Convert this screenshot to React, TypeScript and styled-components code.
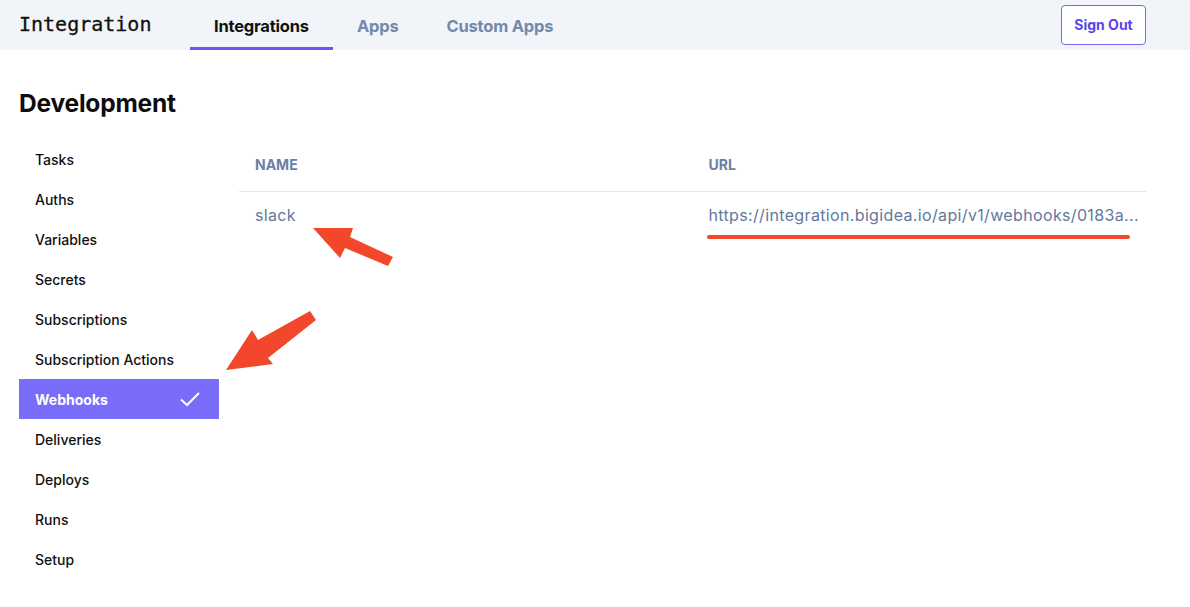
import React from "react";
import styled, { createGlobalStyle } from "styled-components";

const GlobalStyle = createGlobalStyle`
  html, body { margin: 0; padding: 0; background: #ffffff; }
  body { font-family: Inter, "Noto Sans", sans-serif; color: #111111; }
  * { box-sizing: border-box; }
`;

const Page = styled.div`
  position: relative;
  width: 1190px;
  min-height: 607px;
`;

const Header = styled.header`
  height: 50px;
  background: #f1f4f8;
  display: flex;
  align-items: stretch;
  padding: 0 44px 0 19px;
`;

const Logo = styled.div`
  font-family: "DejaVu Sans Mono", "Liberation Mono", monospace;
  font-size: 20px;
  color: #111;
  display: flex;
  align-items: center;
  width: 171px;
  padding-bottom: 2px;
  -webkit-text-stroke: 0.3px #111;
`;

const Tabs = styled.nav`
  display: flex;
  flex: 1;
`;

const Tab = styled.a<{ $active?: boolean }>`
  display: flex;
  align-items: center;
  padding: 4px 24px 0;
  font-size: 16.5px;
  font-weight: 700;
  letter-spacing: -0.2px;
  color: ${(p) => (p.$active ? "#111111" : "#7289aa")};
  border-bottom: 3px solid ${(p) => (p.$active ? "#6a57f0" : "transparent")};
  text-decoration: none;
`;

const HeaderActions = styled.div`
  display: flex;
  align-items: center;
`;

const SignOut = styled.button`
  height: 40px;
  width: 85px;
  margin-top: -1px;
  border: 1px solid #7a66f5;
  border-radius: 4px;
  background: #ffffff;
  color: #5a44e8;
  font-family: Inter, sans-serif;
  font-weight: 700;
  font-size: 14px;
  cursor: pointer;
`;

const Main = styled.main`
  padding: 38px 44px 0 19px;
`;

const Title = styled.h1`
  margin: 0 0 20px;
  font-size: 24.5px;
  font-weight: 700;
  line-height: 31px;
  letter-spacing: -0.2px;
  color: #0d0d0d;
`;

const Body = styled.div`
  display: flex;
  gap: 20px;
  align-items: flex-start;
`;

const Sidebar = styled.ul`
  list-style: none;
  margin: 0;
  padding: 0;
  width: 200px;
  flex-shrink: 0;
`;

const NavItem = styled.li<{ $active?: boolean }>`
  height: 40px;
  display: flex;
  align-items: center;
  justify-content: space-between;
  padding: 0 18px 0 16px;
  font-size: 14px;
  font-weight: ${(p) => (p.$active ? 700 : 500)};
  color: ${(p) => (p.$active ? "#ffffff" : "#111111")};
  background: ${(p) => (p.$active ? "#7a6cfb" : "transparent")};
`;

const TableWrap = styled.div`
  flex: 1;
  min-width: 0;
`;

const Table = styled.table`
  width: 100%;
  border-collapse: collapse;
  table-layout: fixed;
`;

const Th = styled.th`
  width: 50%;
  text-align: left;
  height: 52px;
  padding: 0 16px;
  font-size: 14px;
  font-weight: 700;
  color: #6a81a3;
  border-bottom: 1px solid #e2e6eb;
`;

const Td = styled.td`
  height: 48px;
  padding: 0 6px 0 16px;
  font-size: 16px;
  letter-spacing: 0.35px;
  color: #62799d;
  white-space: nowrap;
  overflow: hidden;
  text-overflow: ellipsis;
`;

const Annotations = styled.svg`
  position: absolute;
  left: 0;
  top: 0;
  pointer-events: none;
`;

const items = [
  "Tasks",
  "Auths",
  "Variables",
  "Secrets",
  "Subscriptions",
  "Subscription Actions",
  "Webhooks",
  "Deliveries",
  "Deploys",
  "Runs",
  "Setup",
];

export default function App() {
  return (
    <Page>
      <GlobalStyle />
      <Header>
        <Logo>Integration</Logo>
        <Tabs>
          <Tab $active>Integrations</Tab>
          <Tab>Apps</Tab>
          <Tab>Custom Apps</Tab>
        </Tabs>
        <HeaderActions>
          <SignOut>Sign Out</SignOut>
        </HeaderActions>
      </Header>
      <Main>
        <Title>Development</Title>
        <Body>
          <Sidebar>
            {items.map((it) => (
              <NavItem key={it} $active={it === "Webhooks"}>
                <span>{it}</span>
                {it === "Webhooks" && (
                  <svg width="22" height="16" viewBox="0 0 22 16">
                    <path d="M2 8.5 L8 14 L20 2" fill="none" stroke="#ffffff" strokeWidth="2" />
                  </svg>
                )}
              </NavItem>
            ))}
          </Sidebar>
          <TableWrap>
            <Table>
              <thead>
                <tr>
                  <Th>NAME</Th>
                  <Th>URL</Th>
                </tr>
              </thead>
              <tbody>
                <tr>
                  <Td>slack</Td>
                  <Td>https://integration.bigidea.io/api/v1/webhooks/0183a...</Td>
                </tr>
              </tbody>
            </Table>
          </TableWrap>
        </Body>
      </Main>
      <Annotations width="1190" height="607" viewBox="0 0 1190 607">
        <polygon
          points="313,228 353,228 350,237 393,257 388,266 345,248 340,258"
          fill="#f2472a"
        />
        <polygon
          points="226,370 252,330 258,340 310,311 316,320 268,358 273,364"
          fill="#f2472a"
        />
        <line x1="709" y1="237" x2="1128" y2="237" stroke="#f2472a" strokeWidth="4" strokeLinecap="round" />
      </Annotations>
    </Page>
  );
}
